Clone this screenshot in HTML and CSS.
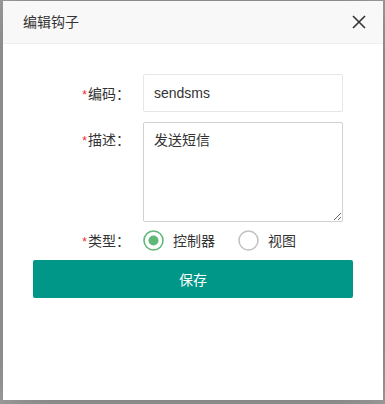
FILE: index.html
```html
<!DOCTYPE html>
<html>
<head>
    <title>编辑钩子</title>
    <link rel="stylesheet" href="styles.css">
</head>
<body>
    <div class="layer">
        <div class="layer-title">
            <span>编辑钩子</span>
            <a class="layer-close" href="#">
                <svg width="14" height="14" viewBox="0 0 14 14">
                    <path d="M1 1 L13 13 M13 1 L1 13" stroke="#333" stroke-width="1.6" fill="none"/>
                </svg>
            </a>
        </div>

        <form class="layer-form" onsubmit="event.preventDefault();">
            <div class="form-item">
                <label class="form-label"><i class="req">*</i>编码：</label>
                <input class="form-input" type="text" name="code" value="sendsms">
            </div>

            <div class="form-item">
                <label class="form-label label-top"><i class="req">*</i>描述：</label>
                <textarea class="form-textarea" name="desc">发送短信</textarea>
            </div>

            <div class="form-item radio-row">
                <label class="form-label"><i class="req">*</i>类型：</label>
                <div class="radio-group">
                    <span class="radio checked">
                        <svg width="21" height="21" viewBox="0 0 21 21">
                            <circle cx="10.5" cy="10.5" r="9.5" stroke="#5FB878" stroke-width="1.6" fill="#fff"/>
                            <circle cx="10.5" cy="10.5" r="5" fill="#5FB878"/>
                        </svg>
                        控制器
                    </span>
                    <span class="radio">
                        <svg width="21" height="21" viewBox="0 0 21 21">
                            <circle cx="10.5" cy="10.5" r="9.5" stroke="#c2c2c2" stroke-width="1.6" fill="#fff"/>
                        </svg>
                        视图
                    </span>
                </div>
            </div>

            <button class="save-button" type="submit">保存</button>
        </form>
    </div>
</body>
</html>
```

FILE: styles.css
```css
body {
    margin: 0;
    height: 404px;
    background-color: #a2a2a2;
    font-family: "Liberation Sans", "Noto Sans CJK SC", sans-serif;
    font-size: 14px;
    color: #333;
    padding: 1px 0 0 3px;
    box-sizing: border-box;
}

.layer {
    width: 380px;
    height: 399px;
    background-color: #fff;
    box-shadow: 1px 1px 50px rgba(0, 0, 0, .3);
}

.layer-title {
    height: 42px;
    line-height: 42px;
    padding: 0 15px 0 20px;
    background-color: #f8f8f8;
    border-bottom: 1px solid #eee;
    display: flex;
    justify-content: space-between;
    align-items: center;
    color: #333;
}

.layer-close {
    display: flex;
    align-items: center;
    margin-right: 2px;
}

.layer-form {
    padding: 30px 30px 0 30px;
}

.form-item {
    display: flex;
    align-items: center;
    margin-bottom: 10px;
}

.form-label {
    width: 97px;
    margin-right: 13px;
    text-align: right;
    color: #333;
}

.label-top {
    align-self: flex-start;
    padding-top: 7px;
}

.req {
    font-style: normal;
    color: #f0262d;
    font-size: 12px;
    margin-right: 1px;
}

.form-input,
.form-textarea {
    width: 200px;
    box-sizing: border-box;
    border: 1px solid #e6e6e6;
    border-radius: 2px;
    padding-left: 10px;
    font-family: "Liberation Sans", "Noto Sans CJK SC", sans-serif;
    font-size: 14px;
    color: #333;
    background-color: #fff;
    outline: none;
}

.form-input {
    height: 38px;
}

.form-textarea {
    height: 100px;
    padding-top: 6px;
    border-color: #d2d2d2;
    resize: vertical;
    margin: 0;
}

.radio-row {
    margin-top: -7px;
    margin-bottom: 5px;
    height: 30px;
}

.radio-group {
    display: flex;
    align-items: center;
}

.radio {
    display: flex;
    align-items: center;
    margin-right: 23px;
    color: #333;
}

.radio svg {
    margin-right: 9px;
}

.save-button {
    display: block;
    width: 320px;
    height: 38px;
    border: none;
    border-radius: 2px;
    background-color: #009688;
    color: #fff;
    font-family: "Liberation Sans", "Noto Sans CJK SC", sans-serif;
    font-size: 14px;
    cursor: pointer;
}
```
